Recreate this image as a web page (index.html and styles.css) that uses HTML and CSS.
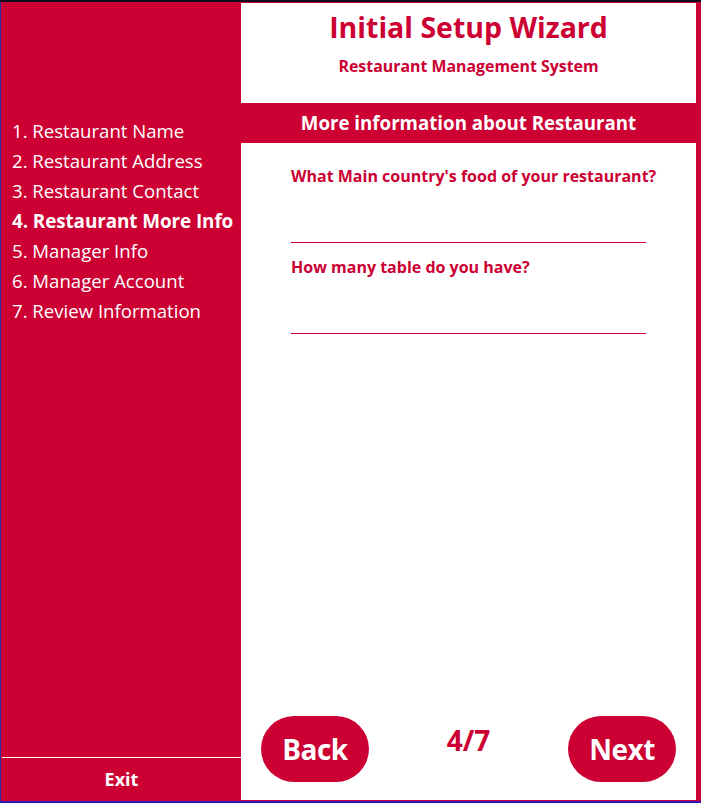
FILE: index.html
```html
<!DOCTYPE html>
<html>
<head>
<meta charset="utf-8">
<link rel="stylesheet" href="styles.css">
</head>
<body>
<div class="frame">
  <aside class="sidebar">
    <ol class="steps">
      <li>1. Restaurant Name</li>
      <li>2. Restaurant Address</li>
      <li>3. Restaurant Contact</li>
      <li class="active">4. Restaurant More Info</li>
      <li>5. Manager Info</li>
      <li>6. Manager Account</li>
      <li>7. Review Information</li>
    </ol>
    <div class="exit">Exit</div>
  </aside>
  <main class="main">
    <header class="header">
      <h1 class="title">Initial Setup Wizard</h1>
      <div class="subtitle">Restaurant Management System</div>
    </header>
    <div class="band">More information about Restaurant</div>
    <section class="content">
      <div class="form">
        <label class="question">What Main country's food of your restaurant?</label>
        <div class="field"></div>
        <label class="question q2">How many table do you have?</label>
        <div class="field"></div>
      </div>
      <div class="nav">
        <button class="btn">Back</button>
        <span class="counter">4/7</span>
        <button class="btn">Next</button>
      </div>
    </section>
  </main>
</div>
</body>
</html>
```
FILE: styles.css
```css
html, body {
  margin: 0;
  padding: 0;
}
body {
  width: 701px;
  height: 803px;
  overflow: hidden;
  background: #0c0c1c;
  font-family: "Open Sans", "Noto Sans", sans-serif;
}
.frame {
  box-sizing: border-box;
  margin-top: 2px;
  height: 801px;
  display: flex;
  background: #cc0033;
  border-left: 1px solid #2a2aa8;
  border-bottom: 2px solid #3414b0;
}
.sidebar {
  width: 240px;
  flex: none;
  display: flex;
  flex-direction: column;
  color: #ffffff;
}
.steps {
  list-style: none;
  margin: 0;
  padding: 114px 0 0 11px;
  flex: 1;
}
.steps li {
  height: 30px;
  line-height: 30px;
  font-size: 18.6px;
  white-space: nowrap;
}
.steps li.active {
  font-weight: 700;
  font-size: 18.9px;
  letter-spacing: -0.1px;
}
.exit {
  border-top: 1px solid #ffffff;
  margin-left: 1px;
  height: 43px;
  line-height: 43px;
  text-align: center;
  font-weight: 700;
  font-size: 18px;
}
.main {
  width: 455px;
  flex: none;
  margin: 1px 5px 0 0;
  display: flex;
  flex-direction: column;
}
.header {
  background: #ffffff;
  height: 100px;
  text-align: center;
  color: #cc0033;
}
.title {
  margin: 0;
  padding-top: 4px;
  font-size: 28.5px;
  line-height: 40px;
  font-weight: 700;
}
.subtitle {
  margin-top: 8px;
  font-size: 15.9px;
  font-weight: 700;
  line-height: 22px;
}
.band {
  height: 40px;
  line-height: 40px;
  text-align: center;
  color: #ffffff;
  font-weight: 700;
  font-size: 18.7px;
}
.content {
  background: #ffffff;
  flex: 1;
  display: flex;
  flex-direction: column;
  justify-content: space-between;
  margin-bottom: 1px;
}
.form {
  padding: 22px 0 0 50px;
  display: flex;
  flex-direction: column;
}
.question {
  color: #cc0033;
  font-weight: 700;
  font-size: 16px;
  line-height: 22px;
}
.q2 {
  margin-top: 13px;
}
.field {
  width: 355px;
  height: 55px;
  border-bottom: 1px solid #cc0033;
}
.nav {
  display: flex;
  justify-content: space-between;
  align-items: center;
  padding: 0 20px 18px 20px;
}
.btn {
  border: none;
  background: #cc0033;
  color: #ffffff;
  font-family: inherit;
  font-weight: 700;
  font-size: 28px;
  height: 66px;
  width: 108px;
  border-radius: 33px;
  padding: 0;
  letter-spacing: -0.5px;
}
.counter {
  color: #cc0033;
  font-weight: 700;
  font-size: 28px;
  margin-bottom: 18px;
}
```
